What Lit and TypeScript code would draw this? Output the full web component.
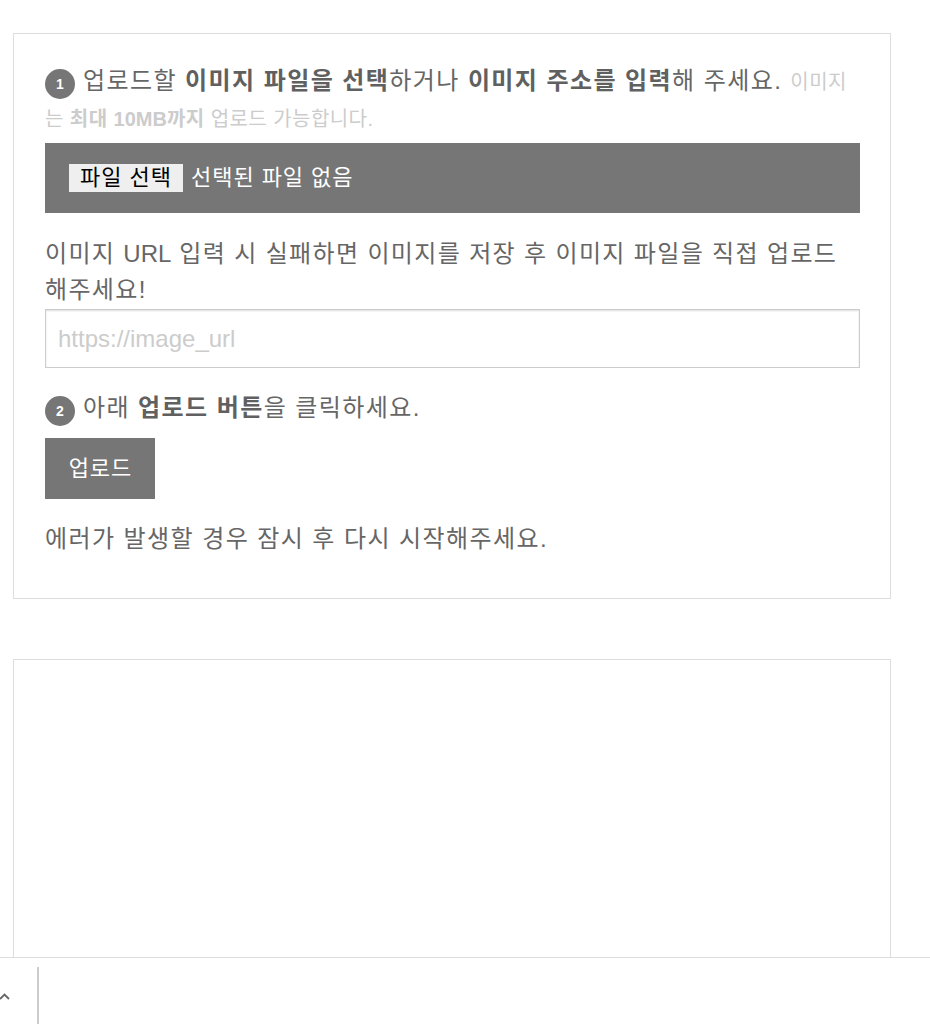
import { LitElement, html, css } from "lit";
import { customElement } from "lit/decorators.js";

@customElement("app-root")
export class AppRoot extends LitElement {
  static styles = css`
    :host {
      display: block;
      height: 1024px;
      overflow: hidden;
      position: relative;
      background: #fff;
      font-family: "Liberation Sans", "Noto Sans CJK KR", sans-serif;
      font-size: 24px;
      line-height: 36px;
      letter-spacing: 1.42px;
      color: #666;
    }
    * { box-sizing: border-box; }
    .page {
      display: flex;
      flex-direction: column;
      gap: 60px;
      width: 878px;
      margin-left: 13px;
      padding-top: 33px;
    }
    .card {
      border: 1px solid #ddd;
      background: #fff;
    }
    .upload {
      height: 566px;
      padding: 29px 30px 0 31px;
      display: flex;
      flex-direction: column;
    }
    .empty { height: 400px; }
    p { margin: 0; }
    b { color: #606060; }
    .latin { letter-spacing: 0; }
    .badge {
      display: inline-flex;
      align-items: center;
      justify-content: center;
      width: 30px;
      height: 30px;
      border-radius: 50%;
      background: #767676;
      color: #fff;
      font-size: 14px;
      font-weight: 700;
      line-height: 1;
      letter-spacing: 0;
      vertical-align: 0;
      margin-right: 8px;
    }
    .small { font-size: 20px; letter-spacing: 0.45px; color: #ccc; }
    .small b { color: #ccc; }
    .filebar {
      height: 70px;
      margin-top: 6px;
      padding: 0 24px;
      background: #767676;
      color: #fff;
      font-size: 22px;
      letter-spacing: 0.95px;
      display: flex;
      align-items: center;
      gap: 8px;
    }
    .filebtn {
      width: 114px;
      height: 28px;
      padding: 0;
      border: 0;
      background: #efefef;
      color: #000;
      font: inherit;
      letter-spacing: inherit;
      line-height: 28px;
    }
    .note { margin-top: 23px; letter-spacing: 1.35px; }
    input {
      display: block;
      width: 100%;
      height: 59px;
      margin-top: 1px;
      padding: 0 12px;
      border: 1px solid #ccc;
      box-shadow: inset 0 1px 2px #ddd;
      outline: 0;
      font: inherit;
      letter-spacing: 0;
      color: #666;
    }
    input::placeholder { color: #ccc; opacity: 1; }
    .step2 { margin-top: 22px; }
    .submit {
      align-self: flex-start;
      width: 110px;
      height: 61px;
      margin-top: 12px;
      padding: 0 0 0 1px;
      border: 0;
      background: #767676;
      color: #fff;
      font: inherit;
      font-size: 22px;
      letter-spacing: 1px;
    }
    .err { margin-top: 22px; }
    .bottom {
      position: absolute;
      left: 0;
      right: 0;
      bottom: 0;
      height: 67px;
      background: #fff;
      border-top: 1px solid #ddd;
      padding-top: 9px;
      display: flex;
    }
    .toggle {
      width: 39px;
      border-right: 2px solid #ccc;
    }
    .toggle svg { display: block; margin-top: 26px; }
  `;

  render() {
    return html`
      <div class="page">
        <section class="card upload">
          <p>
            <span class="badge">1</span>업로드할 <b>이미지 파일을 선택</b>하거나 <b>이미지 주소를 입력</b>해 주세요.
            <span class="small">이미지는 <b>최대 <span class="latin">10MB</span>까지</b> 업로드 가능합니다.</span>
          </p>
          <div class="filebar">
            <button class="filebtn">파일 선택</button>
            <span>선택된 파일 없음</span>
          </div>
          <p class="note">이미지 <span class="latin">URL</span> 입력 시 실패하면 이미지를 저장 후 이미지 파일을 직접 업로드 해주세요!</p>
          <input type="text" placeholder="https://image_url" />
          <p class="step2"><span class="badge">2</span>아래 <b>업로드 버튼</b>을 클릭하세요.</p>
          <button class="submit">업로드</button>
          <p class="err">에러가 발생할 경우 잠시 후 다시 시작해주세요.</p>
        </section>
        <section class="card empty"></section>
      </div>
      <div class="bottom">
        <div class="toggle">
          <svg width="10" height="8" viewBox="0 0 10 8">
            <path d="M0 6 L4.5 1.5 L9 6" fill="none" stroke="#666" stroke-width="1.8" />
          </svg>
        </div>
      </div>
    `;
  }
}
